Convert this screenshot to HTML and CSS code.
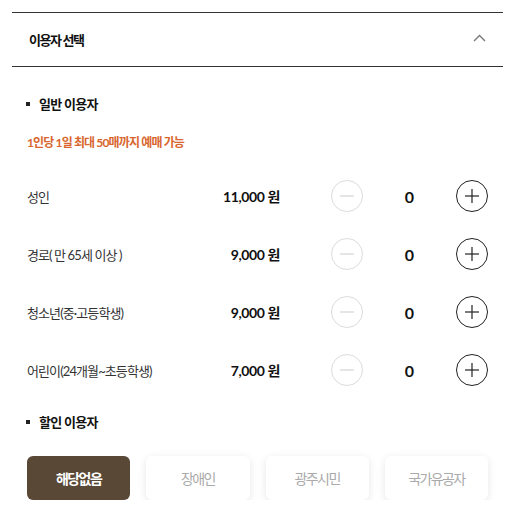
FILE: index.html
```html
<!DOCTYPE html>
<html lang="ko">
<head>
<meta charset="utf-8">
<link rel="stylesheet" href="styles.css">
</head>
<body>
<div class="wrap">
  <div class="acc-head">
    <span class="acc-title">이용자 선택</span>
    <svg class="chev" width="13" height="8" viewBox="0 0 13 8"><polyline points="1,7 6.5,1.5 12,7" fill="none" stroke="#777" stroke-width="1.4"/></svg>
  </div>
  <div class="acc-body">
    <h3 class="sec-title">일반 이용자</h3>
    <p class="notice">1인당 1일 최대 50매까지 예매 가능</p>
    <div class="rows">
      <div class="row">
        <span class="label">성인</span>
        <span class="price">11,000 원</span>
        <div class="counter">
          <span class="btn minus"><svg width="14" height="14" viewBox="0 0 14 14"><line x1="0" y1="7" x2="14" y2="7" stroke="#d4d4d4" stroke-width="1.2"/></svg></span>
          <span class="count">0</span>
          <span class="btn plus"><svg width="14" height="14" viewBox="0 0 14 14"><line x1="0" y1="7" x2="14" y2="7" stroke="#222" stroke-width="1.2"/><line x1="7" y1="0" x2="7" y2="14" stroke="#222" stroke-width="1.2"/></svg></span>
        </div>
      </div>
      <div class="row">
        <span class="label">경로( 만 65세 이상 )</span>
        <span class="price">9,000 원</span>
        <div class="counter">
          <span class="btn minus"><svg width="14" height="14" viewBox="0 0 14 14"><line x1="0" y1="7" x2="14" y2="7" stroke="#d4d4d4" stroke-width="1.2"/></svg></span>
          <span class="count">0</span>
          <span class="btn plus"><svg width="14" height="14" viewBox="0 0 14 14"><line x1="0" y1="7" x2="14" y2="7" stroke="#222" stroke-width="1.2"/><line x1="7" y1="0" x2="7" y2="14" stroke="#222" stroke-width="1.2"/></svg></span>
        </div>
      </div>
      <div class="row">
        <span class="label">청소년(중·고등학생)</span>
        <span class="price">9,000 원</span>
        <div class="counter">
          <span class="btn minus"><svg width="14" height="14" viewBox="0 0 14 14"><line x1="0" y1="7" x2="14" y2="7" stroke="#d4d4d4" stroke-width="1.2"/></svg></span>
          <span class="count">0</span>
          <span class="btn plus"><svg width="14" height="14" viewBox="0 0 14 14"><line x1="0" y1="7" x2="14" y2="7" stroke="#222" stroke-width="1.2"/><line x1="7" y1="0" x2="7" y2="14" stroke="#222" stroke-width="1.2"/></svg></span>
        </div>
      </div>
      <div class="row">
        <span class="label">어린이(24개월~초등학생)</span>
        <span class="price">7,000 원</span>
        <div class="counter">
          <span class="btn minus"><svg width="14" height="14" viewBox="0 0 14 14"><line x1="0" y1="7" x2="14" y2="7" stroke="#d4d4d4" stroke-width="1.2"/></svg></span>
          <span class="count">0</span>
          <span class="btn plus"><svg width="14" height="14" viewBox="0 0 14 14"><line x1="0" y1="7" x2="14" y2="7" stroke="#222" stroke-width="1.2"/><line x1="7" y1="0" x2="7" y2="14" stroke="#222" stroke-width="1.2"/></svg></span>
        </div>
      </div>
    </div>
    <h3 class="sec-title sec-title-2">할인 이용자</h3>
    <div class="discounts">
      <button class="disc active">해당없음</button>
      <button class="disc">장애인</button>
      <button class="disc">광주시민</button>
      <button class="disc">국가유공자</button>
    </div>
  </div>
</div>
</body>
</html>
```

FILE: styles.css
```css
* { box-sizing: border-box; }
html, body { margin: 0; padding: 0; background: #fff; }
body {
  font-family: Lato, "Noto Sans CJK KR", "Noto Sans", sans-serif;
  color: #222;
}
.wrap {
  padding: 12px 26px 0 12px;
}
.acc-head {
  display: flex;
  align-items: center;
  justify-content: space-between;
  height: 55px;
  border-top: 1px solid #333;
  border-bottom: 1px solid #333;
  padding: 0 17px 0 17px;
}
.acc-title {
  font-size: 13px;
  font-weight: 700;
  color: #111;
  letter-spacing: -1.4px;
}
.chev { display: block; margin-top: -3px; }
.acc-body {
  padding: 0 15px;
}
.sec-title {
  margin: 27px 0 0;
  font-size: 13px;
  line-height: 20px;
  font-weight: 700;
  color: #111;
  letter-spacing: -0.7px;
  display: flex;
  align-items: center;
}
.sec-title::before {
  content: "";
  width: 4px;
  height: 4px;
  background: #222;
  margin: 0 9px 0 -1px;
}
.sec-title-2 { margin-top: 13px; }
.notice {
  margin: 19px 0 0;
  font-size: 12px;
  line-height: 20px;
  font-weight: 700;
  color: #d8662e;
  letter-spacing: -0.85px;
}
.rows { margin-top: 14px; }
.row {
  display: flex;
  align-items: center;
  height: 58px;
}
.label {
  flex: 1;
  font-size: 13px;
  color: #333;
  letter-spacing: -0.9px;
}
.price {
  font-size: 14px;
  font-weight: 700;
  color: #111;
  letter-spacing: -0.4px;
}
.counter {
  display: flex;
  align-items: center;
  margin-left: 51px;
}
.btn {
  width: 32px;
  height: 32px;
  border-radius: 50%;
  display: flex;
  align-items: center;
  justify-content: center;
}
.btn svg { display: block; }
.minus { border: 1px solid #dcdcdc; }
.plus { border: 1px solid #222; }
.count {
  width: 93px;
  text-align: center;
  font-size: 16px;
  font-weight: 700;
  color: #111;
}
.discounts {
  margin-top: 24px;
  display: grid;
  grid-template-columns: repeat(4, 1fr);
  gap: 16px;
}
.disc {
  height: 44px;
  border: none;
  border-radius: 6px;
  background: #fff;
  box-shadow: 0 2px 8px rgba(0,0,0,0.1);
  font-family: inherit;
  font-size: 14px;
  color: #aaa;
  letter-spacing: -1.6px;
  padding: 0;
}
.disc.active {
  background: #5a4837;
  color: #fff;
  font-weight: 700;
  box-shadow: none;
}
```
